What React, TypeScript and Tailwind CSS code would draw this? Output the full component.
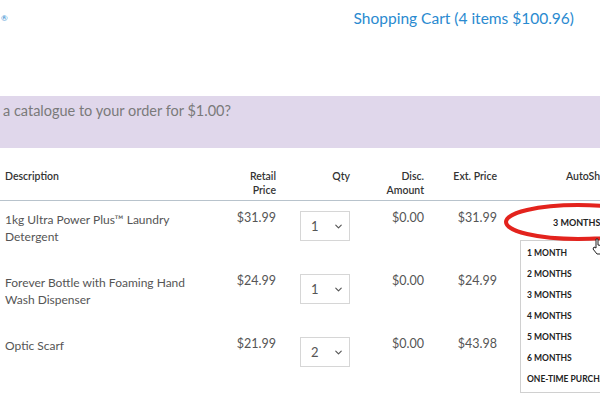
import { ChevronDown } from "lucide-react";

const rows = [
  { desc: ["1kg Ultra Power Plus™ Laundry", "Detergent"], price: "$31.99", qty: "1", disc: "$0.00", ext: "$31.99" },
  { desc: ["Forever Bottle with Foaming Hand", "Wash Dispenser"], price: "$24.99", qty: "1", disc: "$0.00", ext: "$24.99" },
  { desc: ["Optic Scarf"], price: "$21.99", qty: "2", disc: "$0.00", ext: "$43.98" },
];

const months = ["1 Month", "2 Months", "3 Months", "4 Months", "5 Months", "6 Months", "One-Time Purchase"];

function QtySelect({ value }: { value: string }) {
  return (
    <div className="flex items-center justify-between w-[50px] h-[30px] border border-[#d6d6d6] bg-white pl-[10px] pr-[5px] text-[13px] text-[#555]">
      <span>{value}</span>
      <ChevronDown size={11} strokeWidth={2.5} className="text-[#555]" />
    </div>
  );
}

export default function App() {
  return (
    <div className="relative w-[600px] h-[400px] overflow-hidden bg-white font-['Lato',sans-serif]">
      {/* top bar */}
      <div className="flex justify-between h-[96px]">
        <span className="pt-[12px] pl-[1px] text-[8px] text-[#2a8ad0]">®</span>
        <span className="pt-[7px] pr-[26px] text-[15.5px] text-[#2a8ad0]">Shopping Cart (4 items $100.96)</span>
      </div>

      {/* catalogue band */}
      <div className="h-[52px] bg-[#e0d7eb] pl-[3px] pt-[4px] text-[14.5px] text-[#7a7a7a]">
        a catalogue to your order for $1.00?
      </div>

      {/* table header */}
      <div className="grid grid-cols-[211px_60px_74px_74px_73px_103px] pl-[5px] pt-[21px] pb-[3px] border-b border-[#b8c3cc] text-[10.5px] font-semibold leading-[14px] text-[#333]">
        <div>Description</div>
        <div className="text-right">
          Retail
          <br />
          Price
        </div>
        <div className="text-right">Qty</div>
        <div className="text-right">
          Disc.
          <br />
          Amount
        </div>
        <div className="text-right">Ext. Price</div>
        <div className="pl-[69px] whitespace-nowrap">AutoShip</div>
      </div>

      {/* rows */}
      {rows.map((r, i) => (
        <div
          key={i}
          className="grid grid-cols-[211px_60px_74px_74px_73px_103px] pl-[5px] h-[63px] pt-[10px] text-[12px] leading-[17px] text-[#555]"
        >
          <div>
            {r.desc.map((d) => (
              <div key={d}>{d}</div>
            ))}
          </div>
          <div className="text-right -mt-[2px] text-[12.5px]">{r.price}</div>
          <div className="flex justify-end">
            <QtySelect value={r.qty} />
          </div>
          <div className="text-right -mt-[2px] text-[12.5px]">{r.disc}</div>
          <div className="text-right -mt-[2px] text-[12.5px]">{r.ext}</div>
          <div />
        </div>
      ))}

      {/* autoship select value */}
      <div className="absolute left-[553px] top-[216px] text-[9px] font-bold text-[#222] whitespace-nowrap">3 MONTHS</div>

      {/* open dropdown */}
      <div className="absolute left-[520px] top-[240px] w-[100px] h-[153px] bg-white border border-[#d0d0d0] pl-[6px] pt-[5px]">
        {months.map((m) => (
          <div key={m} className="h-[21px] leading-[14px] text-[8.5px] font-bold uppercase text-[#222] whitespace-nowrap">
            {m}
          </div>
        ))}
      </div>

      {/* red annotation ellipse */}
      <svg className="absolute left-[500px] top-[200px]" width="120" height="45" viewBox="0 0 120 45">
        <ellipse cx="78" cy="22" rx="72" ry="17" fill="none" stroke="#e3231d" strokeWidth="4" />
      </svg>

      {/* cursor */}
      <svg className="absolute left-[592px] top-[238px]" width="14" height="18" viewBox="0 0 14 18">
        <path d="M4 1 L4 10 L2 9 L1 11 L5 16 L12 16 L12 8 L6 7 L6 1 Z" fill="#fff" stroke="#222" strokeWidth="1" />
      </svg>
    </div>
  );
}
